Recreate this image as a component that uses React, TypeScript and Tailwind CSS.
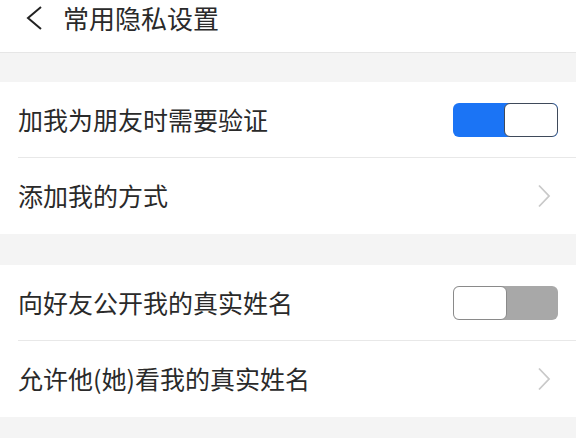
import { useState } from "react";

const font = { fontFamily: '"Noto Sans CJK SC", "Noto Sans", sans-serif' };

function Toggle({ on, onClick }: { on: boolean; onClick: () => void }) {
    return (
        <button
            onClick={onClick}
            className={`flex w-[105px] h-[34px] rounded-[6px] overflow-hidden ${on ? "bg-[#1b74f5] justify-end" : "bg-[#a8a8a8] justify-start"}`}
        >
            <div className={`w-[54px] h-full bg-white rounded-[6px] border-[1.5px] ${on ? "border-[#3f4a5a]" : "border-[#8a8a8a]"}`}></div>
        </button>
    );
}

function ChevronRight() {
    return (
        <svg width="14" height="24" viewBox="0 0 14 24" fill="none">
            <path d="M2 1.5 L12 12 L2 22.5" stroke="#c9c9c9" strokeWidth="1.8" />
        </svg>
    );
}

function Row({ label, children, divider }: { label: string; children: React.ReactNode; divider?: boolean }) {
    return (
        <div className="pl-[18px]">
            <div className={`flex items-center justify-between h-[76px] pr-[18px] ${divider ? "border-b border-[#e8e8e8]" : ""}`}>
                <span className="text-[25px] text-[#2a2a2a]">{label}</span>
                {children}
            </div>
        </div>
    );
}

export default function App() {
    const [verify, setVerify] = useState(true);
    const [publicName, setPublicName] = useState(false);

    return (
        <div className="w-[576px] h-[438px] bg-[#f4f4f4] overflow-hidden" style={font}>
            <div className="h-[53px] bg-white border-b border-[#e6e6e6] flex items-center pb-[16px]">
                <div className="pl-[25px] pr-[20px]">
                    <svg width="18" height="24" viewBox="0 0 18 24" fill="none">
                        <path d="M16 1 L3 12 L16 23" stroke="#222" strokeWidth="2" />
                    </svg>
                </div>
                <span className="text-[26px] text-[#2a2a2a] pb-[2px]">常用隐私设置</span>
            </div>

            <div className="mt-[29px] bg-white">
                <Row label="加我为朋友时需要验证" divider>
                    <Toggle on={verify} onClick={() => setVerify(!verify)} />
                </Row>
                <Row label="添加我的方式">
                    <div className="pr-[7px]"><ChevronRight /></div>
                </Row>
            </div>

            <div className="mt-[31px] bg-white">
                <Row label="向好友公开我的真实姓名" divider>
                    <Toggle on={publicName} onClick={() => setPublicName(!publicName)} />
                </Row>
                <Row label="允许他(她)看我的真实姓名">
                    <div className="pr-[7px]"><ChevronRight /></div>
                </Row>
            </div>
        </div>
    );
}
